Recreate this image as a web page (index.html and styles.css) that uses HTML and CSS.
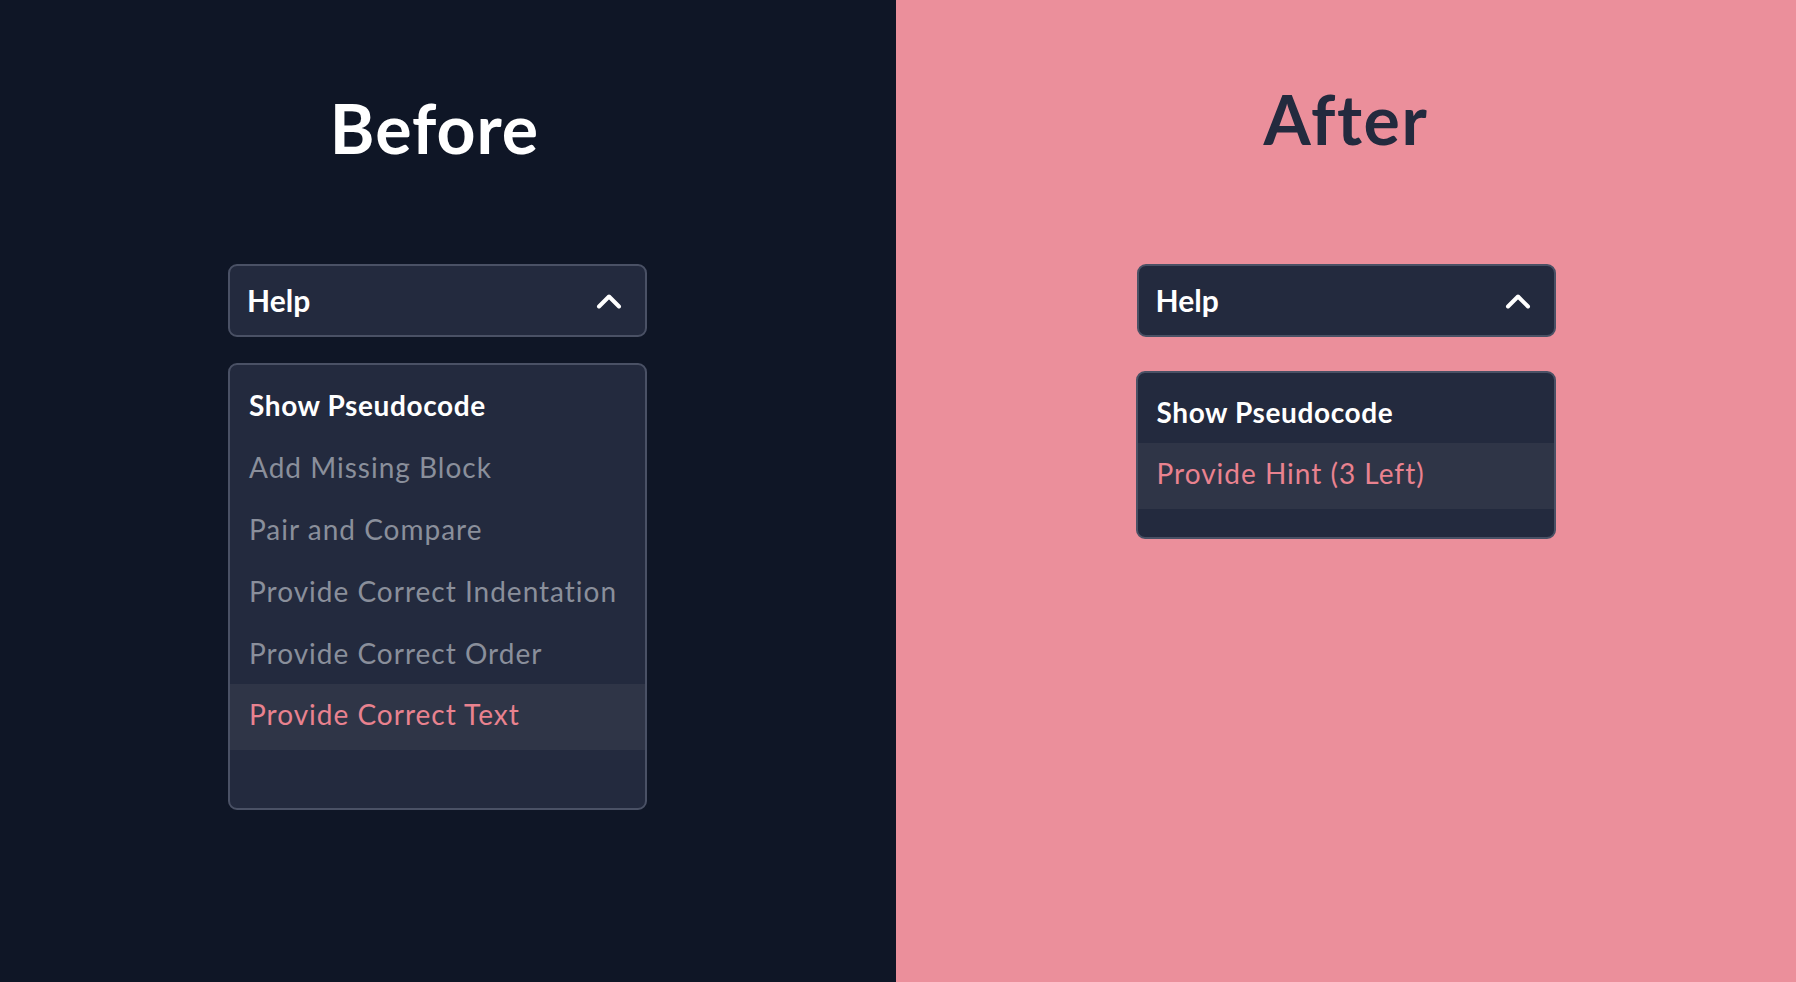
FILE: index.html
```html
<!DOCTYPE html>
<html lang="en">
<head>
<meta charset="utf-8">
<title>Help dropdown: Before / After</title>
<link rel="stylesheet" href="styles.css">
</head>
<body>
<main class="compare">
  <section class="pane pane-before">
    <h1 class="title title-before">Before</h1>
    <div class="dropdown">
      <button class="toggle" type="button">
        <span class="toggle-label">Help</span>
        <svg class="chevron" width="26" height="16" viewBox="0 0 26 16" aria-hidden="true"><polyline points="3,13.5 13,3.5 23,13.5" fill="none" stroke="#ffffff" stroke-width="4" stroke-linecap="round" stroke-linejoin="round"/></svg>
      </button>
      <ul class="menu menu-before">
        <li class="item item-primary">Show Pseudocode</li>
        <li class="item">Add Missing Block</li>
        <li class="item">Pair and Compare</li>
        <li class="item">Provide Correct Indentation</li>
        <li class="item">Provide Correct Order</li>
        <li class="item item-active">Provide Correct Text</li>
      </ul>
    </div>
  </section>
  <section class="pane pane-after">
    <h1 class="title title-after">After</h1>
    <div class="dropdown">
      <button class="toggle" type="button">
        <span class="toggle-label">Help</span>
        <svg class="chevron" width="26" height="16" viewBox="0 0 26 16" aria-hidden="true"><polyline points="3,13.5 13,3.5 23,13.5" fill="none" stroke="#ffffff" stroke-width="4" stroke-linecap="round" stroke-linejoin="round"/></svg>
      </button>
      <ul class="menu menu-after">
        <li class="item item-primary">Show Pseudocode</li>
        <li class="item item-active">Provide Hint (3 Left)</li>
      </ul>
    </div>
  </section>
</main>
</body>
</html>
```
FILE: styles.css
```css
* { box-sizing: border-box; }

html, body {
  margin: 0;
  padding: 0;
}

body {
  font-family: "Lato", "Noto Sans", sans-serif;
  width: 1796px;
  height: 982px;
  overflow: hidden;
}

.compare {
  display: grid;
  grid-template-columns: 896px 900px;
  height: 982px;
}

.pane {
  display: flex;
  flex-direction: column;
  align-items: center;
}

.pane-before {
  background: #0f1626;
  padding-top: 94px;
  padding-right: 21px;
}

.pane-after {
  background: #eb8f9b;
  padding-top: 85px;
}

.title {
  margin: 0;
  font-size: 68px;
  line-height: 68px;
  font-weight: 700;
  letter-spacing: 1px;
}

.title-before {
  color: #ffffff;
  margin-bottom: 102px;
  margin-right: 6px;
}

.title-after {
  color: #232a3e;
  margin-bottom: 111px;
  letter-spacing: 1.6px;
}

.dropdown {
  width: 419px;
  display: flex;
  flex-direction: column;
}

.toggle {
  display: flex;
  align-items: center;
  justify-content: space-between;
  height: 73px;
  padding: 0 23px 0 17px;
  background: #232a3e;
  border: 2px solid #4a5165;
  border-radius: 9px;
  font-family: inherit;
  color: #ffffff;
  cursor: pointer;
}

.toggle-label {
  font-size: 30px;
  line-height: 69px;
  font-weight: 700;
}

.chevron {
  display: block;
  margin-top: 1px;
}

.menu {
  list-style: none;
  margin: 26px 0 0;
  background: #232a3e;
  border: 2px solid #4a5165;
  border-radius: 9px;
  overflow: hidden;
}

.menu-before {
  padding: 9px 0 58px;
}

.menu-after {
  margin-top: 34px;
  margin-left: -1px;
  padding: 8px 0 28px;
}

.item {
  height: 62px;
  padding: 0 19px;
  font-size: 28px;
  line-height: 62px;
  letter-spacing: 1px;
  color: #8a8f9b;
  white-space: nowrap;
}

.item-primary {
  color: #ffffff;
  font-weight: 700;
  letter-spacing: 0.6px;
}

.item-active {
  height: 66px;
  line-height: 60px;
  color: #e9828f;
  background: #2f3547;
}
```
